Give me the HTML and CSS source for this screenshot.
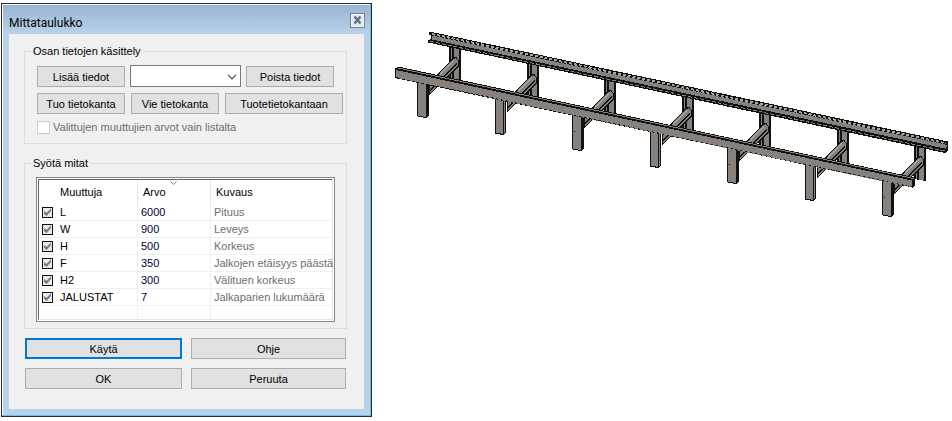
FILE: index.html
```html
<!DOCTYPE html>
<html lang="fi">
<head>
  <meta charset="UTF-8">
  <meta name="viewport" content="width=device-width, initial-scale=1.0">
  <title>Mittataulukko</title>
  <link rel="stylesheet" href="styles.css">
</head>
<body>

  <main class="workspace">
    <section class="dialog" aria-labelledby="dialogTitle">
      <header class="title-bar">
        <h1 id="dialogTitle">Mittataulukko</h1>
        <button class="close-button" type="button" aria-label="Sulje">
          <svg width="9" height="8" viewBox="0 0 9 8"><path d="M1.5 .5 7.5 7.5M7.5 .5 1.5 7.5" stroke="#64707c" stroke-width="2.4"/></svg>
        </button>
      </header>

      <form class="dialog-body">
        <!-- Part data -->
        <fieldset class="group data-group">
          <legend>Osan tietojen käsittely</legend>
          <div class="button-row">
            <button class="btn" type="button">Lisää tiedot</button>
            <div class="combo">
              <select aria-label="Tiedot"><option></option></select>
              <svg class="combo-arrow" width="10" height="6" viewBox="0 0 10 6"><path d="M1 .8 5 4.8 9 .8" fill="none" stroke="#444" stroke-width="1.2"/></svg>
            </div>
            <button class="btn" type="button">Poista tiedot</button>
          </div>
          <div class="button-row spaced">
            <button class="btn" type="button">Tuo tietokanta</button>
            <button class="btn" type="button">Vie tietokanta</button>
            <button class="btn wide" type="button">Tuotetietokantaan</button>
          </div>
          <div class="option">
            <input type="checkbox" id="listOnly" disabled>
            <label for="listOnly">Valittujen muuttujien arvot vain listalta</label>
          </div>
        </fieldset>

        <!-- Dimensions -->
        <fieldset class="group size-group">
          <legend>Syötä mitat</legend>
          <div class="list">
            <table>
              <thead>
                <tr>
                  <th class="name">Muuttuja</th>
                  <th class="value">Arvo
                    <svg class="sort" width="7" height="4" viewBox="0 0 7 4"><path d="M.5 .5 3.5 3.5 6.5 .5" fill="none" stroke="#888"/></svg>
                  </th>
                  <th>Kuvaus</th>
                </tr>
              </thead>
              <tbody>
                <tr><td><label><input type="checkbox" checked>L</label></td><td>6000</td><td>Pituus</td></tr>
                <tr><td><label><input type="checkbox" checked>W</label></td><td>900</td><td>Leveys</td></tr>
                <tr><td><label><input type="checkbox" checked>H</label></td><td>500</td><td>Korkeus</td></tr>
                <tr><td><label><input type="checkbox" checked>F</label></td><td>350</td><td>Jalkojen etäisyys päästä</td></tr>
                <tr><td><label><input type="checkbox" checked>H2</label></td><td>300</td><td>Välituen korkeus</td></tr>
                <tr><td><label><input type="checkbox" checked>JALUSTAT</label></td><td>7</td><td>Jalkaparien lukumäärä</td></tr>
                <tr><td></td><td></td><td></td></tr>
              </tbody>
            </table>
          </div>
        </fieldset>

        <div class="actions">
          <button class="btn default" type="button">Käytä</button>
          <button class="btn" type="button">Ohje</button>
          <button class="btn" type="button">OK</button>
          <button class="btn" type="button">Peruuta</button>
        </div>
      </form>
    </section>

    <!-- 3D model of the stand -->
    <div class="model">
      <svg viewBox="372 0 580 230" role="img" aria-label="Malli" shape-rendering="crispEdges">
        <defs>
          <g id="support">
            <path d="M449 45h12v37l-12-2z" fill="#111"/>
            <path d="M451.500 46v34" stroke="#86817d"/>
            <path d="M454 47h5v34h-5z" fill="#86817d"/>
            <path d="M429 84 453 58.500 456 57.500 458.500 60.500V66L429 95z" fill="#86817d" stroke="#111"/>
            <path d="M429 91.500 457 63.500" stroke="#111"/>
            <path d="M434 80.500 454 60.500" stroke="#a5a29b" stroke-width="2"/>
          </g>
          <g id="legDark">
            <path d="M417.500 80H428.500V115.500L426 117.500 417.500 116z" fill="#86817d" stroke="#111"/>
            <path d="M426 82h3v34h-3z" fill="#111"/>
          </g>
          <g id="legLight">
            <path d="M417.500 80H427.500V115.500L425 117.500 417.500 116z" fill="#86817d" stroke="#111"/>
            <path d="M425.500 82v34" stroke="#111"/>
          </g>
        </defs>

        <use href="#support"/>
        <use href="#support" x="78" y="17"/>
        <use href="#support" x="155" y="33"/>
        <use href="#support" x="233" y="50"/>
        <use href="#support" x="310" y="66"/>
        <use href="#support" x="388" y="83"/>
        <use href="#support" x="465" y="99"/>

        <use href="#legDark"/>
        <use href="#legLight" x="78" y="17"/>
        <use href="#legDark" x="155" y="33"/>
        <use href="#legLight" x="233" y="50"/>
        <use href="#legDark" x="310" y="66"/>
        <use href="#legLight" x="388" y="83"/>
        <use href="#legDark" x="465" y="99"/>
        <path d="M574 131h1v1h-1zM729 164h1v1h-1zM884 197h1v1h-1z" fill="#111"/>

        <!-- Rear beam -->
        <path d="M429 32H432L948 141.500V151L945 153 428 42.500V40.500L430.500 39V35.500L429 34.500z" fill="#111"/>
        <path d="M432 37.500 946.500 146.800" stroke="#86817d" stroke-width="4"/>
        <path d="M432 34 946 143.300" stroke="#aaa6a0" stroke-width="2" stroke-dasharray="3 2"/>
        <path d="M430 41.300 944.500 151" stroke="#86817d" stroke-width="1" stroke-dasharray="4 2"/>

        <!-- Front beam -->
        <path d="M395 68.500 398 66.500 915 177.500V185.500L912.500 187.500 395 78z" fill="#111"/>
        <path d="M396 70 912 180.500V186.500L396 77z" fill="#86817d"/>
        <path d="M398 68 914 178.600" stroke="#86817d" stroke-width="1"/>
        <path d="M400 78 911 187" stroke="#86817d" stroke-width="1" stroke-dasharray="3 2"/>
      </svg>
    </div>
  </main>

</body>
</html>
```
FILE: styles.css
```css
* {
  box-sizing: border-box;
}

body {
  margin: 0;
  background: #fff;
  color: #000;
  font-family: "Liberation Sans", Arial, sans-serif;
  font-size: 11px;
  line-height: 13px;
}

button,
select,
input {
  font: inherit;
  color: inherit;
  margin: 0;
}

.workspace {
  display: flex;
  align-items: flex-start;
}

/* Dialog window */
.dialog {
  flex: none;
  width: 371px;
  margin: 3px 0 0 1px;
  padding: 2px 7px 7px;
  border: 1px solid #2b2b2b;
  background: linear-gradient(#99b4d1, #b9d1ea 30px);
  box-shadow: inset -1px -1px #5cc5e0, inset 1px 1px #fff;
}

.title-bar {
  display: flex;
  align-items: center;
  justify-content: space-between;
  height: 28px;
}

h1 {
  margin: 6px 0 0;
  font-family: Roboto, "Liberation Sans", sans-serif;
  font-size: 12px;
  font-weight: 400;
}

.close-button {
  display: flex;
  align-items: center;
  justify-content: center;
  width: 15px;
  height: 15px;
  margin-right: -1px;
  padding: 0;
  border: 1px solid #75808c;
  background: #dce8f5;
  box-shadow: inset 0 0 0 1px #f4f8fc;
}

.dialog-body {
  padding: 11px 17px 20px 15px;
  background: #f0f0f0;
}

/* Group boxes */
.group {
  min-width: 0;
  margin: 0;
  border: 1px solid #dcdcdc;
}

legend {
  padding: 0 2px;
  margin-left: -6px;
}

.data-group {
  padding: 7px 3px 9px 12px;
}

.size-group {
  margin-top: 13px;
  padding: 7px 11px 6px 11px;
}

.size-group legend {
  margin-left: -5px;
}

.btn {
  height: 21px;
  padding: 2px 0 0;
  border: 1px solid #adadad;
  background: #e1e1e1;
}

.button-row {
  display: flex;
  align-items: flex-end;
  gap: 5px;
}

.button-row .btn {
  width: 88px;
}

.button-row .wide {
  width: 118px;
}

.spaced {
  gap: 6px;
  margin-top: 6px;
}

.combo {
  position: relative;
  width: 111px;
}

.combo select {
  display: block;
  width: 100%;
  height: 22px;
  border: 1px solid #7a7a7a;
  border-radius: 0;
  background: #fff;
  appearance: none;
}

.combo-arrow {
  position: absolute;
  top: 9px;
  right: 4px;
  pointer-events: none;
}

.option {
  display: flex;
  align-items: center;
  gap: 3px;
  margin-top: 7px;
  color: #6d6d6d;
}

.option input {
  width: 13px;
  height: 13px;
  border: 1px solid #ccc;
  background: #fff;
  appearance: none;
}

/* Variable list */
.list {
  padding: 1px;
  border: 1px solid #828790;
  background: #fff;
}

table {
  width: 100%;
  border: 1px solid #e3e3e3;
  border-top-color: #646464;
  border-left-color: #646464;
  border-spacing: 0;
  table-layout: fixed;
}

th {
  position: relative;
  height: 24px;
  padding: 0 0 0 5px;
  border-left: 1px solid #e5e5e5;
  font-weight: 400;
  text-align: left;
}

th.name {
  width: 98px;
  padding-left: 21px;
}

th.value {
  width: 73px;
}

th:first-child,
td:first-child {
  border-left: 0;
}

.sort {
  position: absolute;
  top: 1px;
  left: 32px;
}

td {
  height: 17px;
  padding: 0 0 0 3px;
  border-left: 1px solid #f0f0f0;
  border-bottom: 1px solid #f0f0f0;
  white-space: nowrap;
}

tr:last-child td {
  height: 13px;
  border-bottom: 0;
}

td:nth-child(2) {
  color: #00003c;
}

td:nth-child(3) {
  color: #6d6d6d;
}

td label {
  display: flex;
  align-items: center;
  gap: 7px;
}

td input {
  width: 11px;
  height: 11px;
  border: 1px solid #111;
  background: repeating-conic-gradient(#d4d4d4 0 25%, #fff 0 50%) 0 0 / 2px 2px;
  appearance: none;
}

td input:checked::before {
  content: "";
  display: block;
  width: 9px;
  height: 9px;
  background: #777;
  clip-path: polygon(11% 40%, 38% 62%, 89% 10%, 89% 40%, 38% 95%, 11% 70%);
}

/* Bottom buttons */
.actions {
  display: grid;
  grid-template-columns: 157px 1fr;
  gap: 9px;
  margin-top: 9px;
  padding: 0 1px;
}

.default {
  border: 2px solid #0078d7;
}

/* Model view */
.model {
  flex: 1;
  min-width: 0;
}

.model svg {
  display: block;
  width: 100%;
}
```
